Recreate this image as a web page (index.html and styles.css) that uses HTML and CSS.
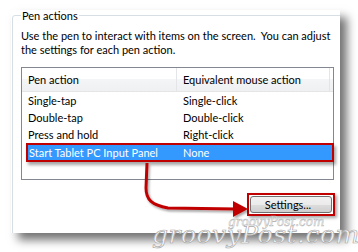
FILE: index.html
```html
<!DOCTYPE html>
<html lang="en">
<head>
    <meta charset="UTF-8">
    <meta name="viewport" content="width=device-width, initial-scale=1.0">
    <title>Pen actions</title>
    <link rel="stylesheet" href="styles.css">
</head>
<body>
    <div class="window">
        <fieldset class="group">
            <legend>Pen actions</legend>
            <p class="intro">Use the pen to interact with items on the screen.&nbsp; You can adjust<br>the settings for each pen action.</p>

            <div class="list">
                <div class="list-head">
                    <div class="head-cell">Pen action</div>
                    <div class="head-cell">Equivalent mouse action</div>
                    <div class="head-cell"></div>
                </div>
                <div class="list-row"><span>Single-tap</span><span>Single-click</span></div>
                <div class="list-row"><span>Double-tap</span><span>Double-click</span></div>
                <div class="list-row"><span>Press and hold</span><span>Right-click</span></div>
                <div class="list-row selected"><span>Start Tablet PC Input Panel</span><span>None</span></div>
            </div>

            <div class="actions">
                <div class="callout">
                    <button type="button" class="settings-button">Settings...</button>
                </div>
            </div>
        </fieldset>
    </div>

    <!-- annotation arrow from the selected row to the button -->
    <svg class="arrow" width="358" height="252" viewBox="0 0 358 252">
        <defs>
            <filter id="shade" x="-20%" y="-20%" width="140%" height="140%">
                <feDropShadow dx="1.5" dy="2" stdDeviation="1.2" flood-color="#000" flood-opacity="0.35"/>
            </filter>
        </defs>
        <g filter="url(#shade)">
            <path d="M147,163 L146,188 C146,200 152,205 168,208 L236,209" fill="none" stroke="#c00000" stroke-width="3"/>
            <polygon points="233,201 248,209 233,217" fill="#c00000"/>
        </g>
    </svg>

    <div class="watermark-small">groovyPost.com</div>
    <div class="watermark">groovyPost.com</div>
</body>
</html>
```
FILE: styles.css
```css
/* Basic Reset */
* {
    margin: 0;
    padding: 0;
    box-sizing: border-box;
}

body {
    background-color: #ffffff;
    color: #000000;
    font-family: Lato, "Open Sans", sans-serif;
    font-size: 11px;
    width: 358px;
    height: 252px;
    overflow: hidden;
    position: relative;
}

/* Dialog panel */
.window {
    margin: 10px 0 0 11px;
    width: 329px;
    height: 223px;
    background-color: #ffffff;
    box-shadow: 7px 7px 9px rgba(0, 0, 0, 0.55);
    overflow: hidden;
}

/* Group box */
.group {
    margin: -2px 0 0 1px;
    width: 345px;
    height: 260px;
    padding: 0 0 0 8px;
    border: 1px solid #d5dfe5;
    border-radius: 3px;
}

.group legend {
    padding: 0 1px;
    line-height: 15px;
}

.intro {
    margin-top: 6px;
    line-height: 13.5px;
    white-space: nowrap;
}

/* List view */
.list {
    margin-top: 11px;
    width: 313px;
    height: 113px;
    border: 1px solid #828790;
}

.list-head {
    display: grid;
    grid-template-columns: 155px 153px 1fr;
    height: 24px;
    border-bottom: 1px solid #e5e5e5;
    background: linear-gradient(#ffffff 0%, #ffffff 50%, #f4f5f7 50%, #eff0f2 100%);
}

.head-cell {
    padding: 5px 0 0 6px;
    border-right: 1px solid #e3e5e8;
}

.head-cell:last-child {
    border-right: none;
}

.list-row {
    display: grid;
    grid-template-columns: 155px 1fr;
    height: 17px;
    line-height: 17px;
}

.list-row span {
    padding-left: 6px;
}

/* Selected row, boxed in red */
.list-row.selected {
    grid-template-columns: 154px 1fr;
    height: 19px;
    line-height: 15px;
    margin: 0 -1px 0 4px;
    border: 2px solid #c00000;
    background-color: #3399ff;
    color: #ffffff;
    box-shadow: 2px 3px 3px rgba(0, 0, 0, 0.35);
}

.list-row.selected span {
    padding-left: 1px;
}

/* Settings button */
.actions {
    width: 313px;
    margin-top: 13px;
    display: flex;
    justify-content: flex-end;
}

.callout {
    margin-right: -1px;
    width: 88px;
    height: 23px;
    padding: 1px;
    border: 2px solid #c00000;
    box-shadow: 2px 2px 3px rgba(0, 0, 0, 0.35);
}

.settings-button {
    display: block;
    width: 100%;
    height: 100%;
    border: 1px solid #707070;
    border-radius: 3px;
    background: linear-gradient(#f2f2f2 0%, #ebebeb 50%, #dddddd 50%, #cfcfcf 100%);
    font-family: inherit;
    font-size: 11px;
    color: #000000;
    padding-right: 6px;
}

/* Annotation and watermark */
.arrow {
    position: absolute;
    left: 0;
    top: 0;
}

.watermark,
.watermark-small {
    position: absolute;
    font-family: "DejaVu Serif", serif;
    font-style: italic;
    white-space: nowrap;
}

.watermark {
    left: 152px;
    top: 220px;
    font-size: 25px;
    color: rgba(255, 255, 255, 0.85);
    -webkit-text-stroke: 0.7px #a9a9a9;
    letter-spacing: 0.5px;
}

.watermark-small {
    left: 228px;
    top: 215px;
    font-size: 12px;
    color: rgba(255, 255, 255, 0.7);
    -webkit-text-stroke: 0.5px #b5b5b5;
}
```
